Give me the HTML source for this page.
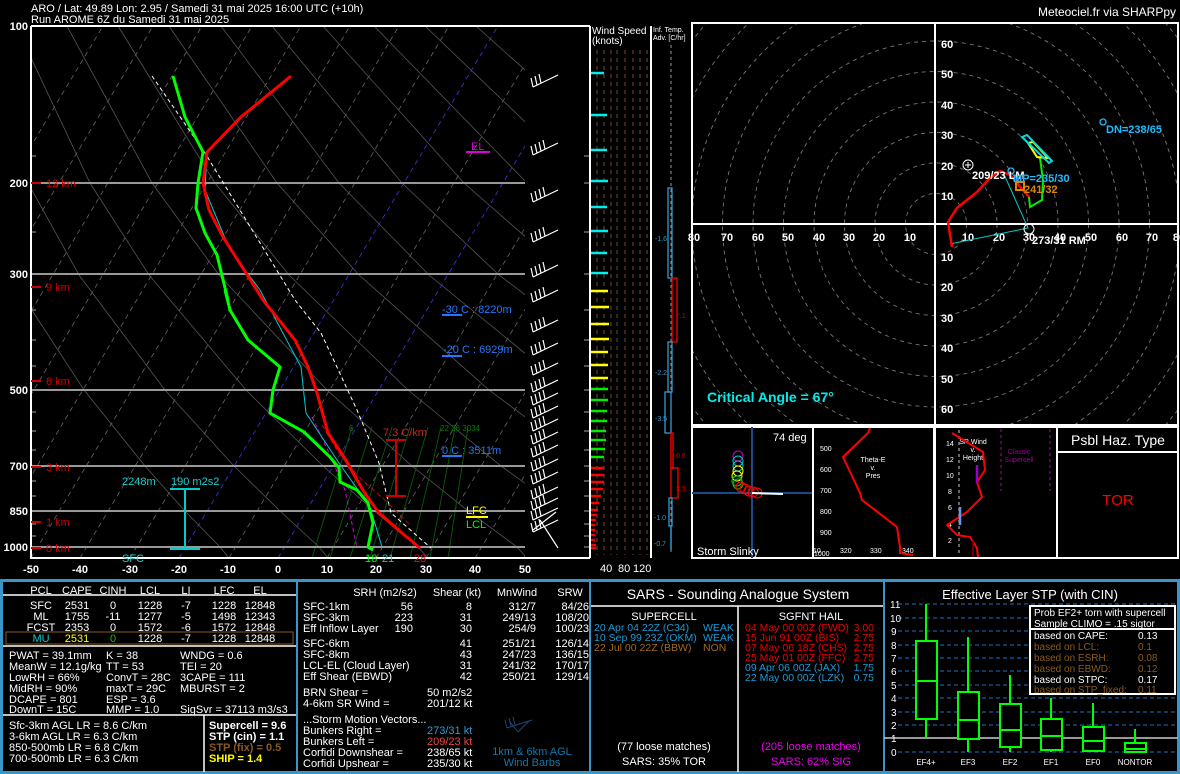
<!DOCTYPE html>
<html><head><meta charset="utf-8"><style>
html,body{margin:0;padding:0;background:#000;}
svg{display:block;font-family:"Liberation Sans",sans-serif;}
</style></head><body>
<svg width="1180" height="774" viewBox="0 0 1180 774" xmlns="http://www.w3.org/2000/svg">
<defs>
<clipPath id="sk"><rect x="31" y="26" width="494" height="532"/></clipPath>
<clipPath id="hd"><rect x="692" y="23" width="486" height="402"/></clipPath>
<g id="barb" stroke="#fff" stroke-width="1.2" fill="none"><path d="M533 5 L558 -7 M533 5 L531 -4 M537 3 L535 -6 M541 1 L539 -8 M545 -1 L543 -10"/></g>
<g id="barb2" stroke="#fff" stroke-width="1.2" fill="none"><path d="M533 5 L558 -7 M533 5 L531 -4 M537 3 L535 -6 M541 1 L539 -8"/></g>
</defs>
<rect width="1180" height="774" fill="#000"/>
<!-- header -->
<text x="31" y="12" fill="#fff" font-size="11">ARO / Lat: 49.89 Lon: 2.95 / Samedi 31 mai 2025 16:00 UTC (+10h)</text>
<text x="31" y="23" fill="#fff" font-size="11">Run AROME 6Z du Samedi 31 mai 2025</text>
<text x="1176" y="16" fill="#fff" font-size="12" text-anchor="end">Meteociel.fr via SHARPpy</text>

<!-- SKEW-T -->
<g clip-path="url(#sk)">
<g stroke="#666" stroke-width="0.8" stroke-dasharray="5,4">
<line x1="-216" y1="558" x2="103" y2="26"/><line x1="-166" y1="558" x2="153" y2="26"/><line x1="-117" y1="558" x2="202" y2="26"/><line x1="-67" y1="558" x2="252" y2="26"/><line x1="-18" y1="558" x2="301" y2="26"/><line x1="31" y1="558" x2="350" y2="26"/><line x1="80" y1="558" x2="399" y2="26"/><line x1="130" y1="558" x2="449" y2="26"/><line x1="229" y1="558" x2="548" y2="26"/><line x1="327" y1="558" x2="646" y2="26"/><line x1="376" y1="558" x2="695" y2="26"/><line x1="426" y1="558" x2="745" y2="26"/><line x1="475" y1="558" x2="794" y2="26"/><line x1="524" y1="558" x2="843" y2="26"/>
</g>
<g stroke="#33c" stroke-width="0.9" stroke-dasharray="5,4"><line x1="179" y1="558" x2="498" y2="26"/><line x1="278" y1="558" x2="597" y2="26"/></g>
<g stroke="#555" stroke-width="0.8" fill="none">
<polyline points="229,558 220,547 184,510 145,466 84,390 9,275 -35,183 -86,26"/>
<polyline points="328,558 319,547 279,510 234,466 165,390 79,275 28,183 -35,26"/>
<polyline points="428,558 418,547 373,510 323,466 246,390 149,275 90,183 16,26"/>
<polyline points="527,558 517,547 467,510 412,466 327,390 219,275 152,183 67,26"/>
<polyline points="626,558 616,547 562,510 501,466 408,390 289,275 215,183 118,26"/>
<polyline points="714,547 656,510 591,466 489,390 359,275 277,183 169,26"/>
<polyline points="813,547 750,510 680,466 570,390 429,275 339,183 221,26"/>
<polyline points="912,547 845,510 769,466 651,390 499,275 402,183 272,26"/>
<polyline points="1011,547 939,510 858,466 732,390 569,275 464,183 323,26"/>
<polyline points="947,466 813,390 639,275 527,183 374,26"/>
<polyline points="894,390 709,275 589,183 425,26"/>
<polyline points="779,275 651,183 476,26"/>
</g>
<g stroke="#0a5a0a" stroke-width="0.9">
<line x1="312" y1="558" x2="352" y2="427"/><line x1="330" y1="558" x2="372" y2="427"/><line x1="350" y1="558" x2="392" y2="427"/><line x1="370" y1="558" x2="410" y2="427"/><line x1="390" y1="558" x2="428" y2="427"/><line x1="410" y1="558" x2="441" y2="427"/><line x1="430" y1="558" x2="455" y2="427"/><line x1="448" y1="558" x2="468" y2="427"/>
</g>
</g>
<g font-size="8" fill="#0a7a0a"><text x="349" y="431">6</text><text x="440" y="431">22 26 3034</text></g>
<!-- isobars -->
<g stroke="#999" stroke-width="2"><line x1="31" y1="183" x2="525" y2="183"/><line x1="31" y1="274" x2="525" y2="274"/><line x1="31" y1="390" x2="525" y2="390"/><line x1="31" y1="466" x2="525" y2="466"/><line x1="31" y1="511" x2="525" y2="511"/><line x1="31" y1="547" x2="525" y2="547"/></g>
<g stroke="#888" stroke-width="1.2"><line x1="31" y1="156" x2="36" y2="156"/><line x1="31" y1="232" x2="36" y2="232"/><line x1="31" y1="310" x2="36" y2="310"/><line x1="31" y1="340" x2="36" y2="340"/><line x1="31" y1="366" x2="36" y2="366"/><line x1="31" y1="412" x2="36" y2="412"/><line x1="31" y1="431" x2="36" y2="431"/><line x1="31" y1="450" x2="36" y2="450"/><line x1="31" y1="481" x2="36" y2="481"/><line x1="31" y1="496" x2="36" y2="496"/><line x1="31" y1="524" x2="36" y2="524"/><line x1="31" y1="536" x2="36" y2="536"/>
<line x1="584" y1="156" x2="590" y2="156"/><line x1="584" y1="183" x2="590" y2="183"/><line x1="584" y1="232" x2="590" y2="232"/><line x1="584" y1="274" x2="590" y2="274"/><line x1="584" y1="310" x2="590" y2="310"/><line x1="584" y1="340" x2="590" y2="340"/><line x1="584" y1="366" x2="590" y2="366"/><line x1="584" y1="390" x2="590" y2="390"/><line x1="584" y1="412" x2="590" y2="412"/><line x1="584" y1="431" x2="590" y2="431"/><line x1="584" y1="450" x2="590" y2="450"/><line x1="584" y1="466" x2="590" y2="466"/><line x1="584" y1="481" x2="590" y2="481"/><line x1="584" y1="496" x2="590" y2="496"/><line x1="584" y1="511" x2="590" y2="511"/><line x1="584" y1="524" x2="590" y2="524"/><line x1="584" y1="536" x2="590" y2="536"/><line x1="584" y1="547" x2="590" y2="547"/></g>
<!-- frame -->
<path d="M31 26 L590 26 M31 26 L31 558 L590 558" stroke="#fff" stroke-width="2" fill="none"/>
<g fill="#fff" font-size="11" font-weight="bold" text-anchor="end"><text x="28" y="30">100</text><text x="28" y="187">200</text><text x="28" y="278">300</text><text x="28" y="394">500</text><text x="28" y="470">700</text><text x="28" y="515">850</text><text x="28" y="551">1000</text></g>
<g fill="#fff" font-size="11" font-weight="bold" text-anchor="middle"><text x="31" y="573">-50</text><text x="80" y="573">-40</text><text x="130" y="573">-30</text><text x="179" y="573">-20</text><text x="228" y="573">-10</text><text x="278" y="573">0</text><text x="327" y="573">10</text><text x="376" y="573">20</text><text x="426" y="573">30</text><text x="475" y="573">40</text><text x="525" y="573">50</text></g>
<g fill="#c00" font-size="11"><text x="46" y="187">12 km</text><text x="46" y="291">9 km</text><text x="46" y="385">6 km</text><text x="46" y="471">3 km</text><text x="46" y="526">1 km</text><text x="46" y="552">0 km</text></g>
<g stroke="#c00" stroke-width="2"><line x1="31" y1="183" x2="41" y2="183"/><line x1="31" y1="287" x2="41" y2="287"/><line x1="31" y1="381" x2="41" y2="381"/><line x1="31" y1="467" x2="41" y2="467"/><line x1="31" y1="522" x2="41" y2="522"/><line x1="31" y1="548" x2="41" y2="548"/></g>
<!-- profiles -->
<g clip-path="url(#sk)" fill="none">
<polyline stroke="#fff" stroke-width="1" stroke-dasharray="4,3" points="152,76 205,153 295,300 321,333 357,410 379,463 391,513 431,548"/>
<polyline stroke="#d0d" stroke-width="1" stroke-dasharray="4,3" points="312,417 330,455 345,490 357,548"/>
<polyline stroke="#c00" stroke-width="1" stroke-dasharray="5,3" points="322,425 340,455 362,480 385,500 410,525"/>
<polyline stroke="#0cc" stroke-width="1" points="290,76 241,117 207,152 205,190 230,250 260,290 301,367 306,413 339,463 370,507 382,547"/>
<polyline stroke="#0f0" stroke-width="3" points="173,76 185,117 203,152 198,183 196,208 205,233 217,255 228,300 225,290 230,310 248,340 280,367 273,390 270,413 304,432 330,457 339,468 340,482 357,490 368,503 373,523 368,547 373,550"/>
<polyline stroke="#f00" stroke-width="3" points="291,76 241,117 207,152 203,183 209,210 223,237 246,273 263,300 295,340 308,367 317,393 328,433 344,457 357,480 366,495 379,513 402,533 420,548"/>
</g>
<!-- annotations -->
<g stroke="#c00" stroke-width="2"><line x1="396" y1="440" x2="396" y2="496"/><line x1="386" y1="440" x2="406" y2="440"/><line x1="386" y1="496" x2="406" y2="496"/></g>
<text x="383" y="436" fill="#c22" font-size="11">7.3 C/km</text>
<g stroke="#0cc" stroke-width="2"><line x1="185" y1="489" x2="185" y2="549"/><line x1="170" y1="489" x2="200" y2="489"/><line x1="170" y1="549" x2="200" y2="549"/></g>
<text x="122" y="485" fill="#2cc" font-size="11">2248m</text><text x="171" y="485" fill="#2cc" font-size="11">190 m2s2</text>
<text x="122" y="562" fill="#2cc" font-size="11">SFC</text>
<text x="365" y="562" fill="#0f0" font-size="11">18</text><text x="382" y="562" fill="#0cc" font-size="11">21</text><text x="414" y="562" fill="#f00" font-size="11">28</text>
<text x="471" y="150" fill="#d0d" font-size="11">EL</text><line x1="466" y1="152" x2="490" y2="152" stroke="#d0d" stroke-width="2"/>
<text x="466" y="514" fill="#ff0" font-size="11">LFC</text><line x1="466" y1="517" x2="488" y2="517" stroke="#ff0" stroke-width="2"/>
<text x="466" y="528" fill="#0f0" font-size="11">LCL</text>
<g fill="#27f" font-size="11"><text x="442" y="313">-30 C : 8220m</text><text x="443" y="353">-20 C : 6929m</text><text x="442" y="454">0 C : 3511m</text></g>
<g stroke="#27f" stroke-width="2"><line x1="442" y1="315" x2="462" y2="315"/><line x1="442" y1="356" x2="462" y2="356"/><line x1="442" y1="456" x2="462" y2="456"/></g>
<!-- barbs -->
<use href="#barb2" y="82"/><use href="#barb" y="150"/><use href="#barb" y="197"/><use href="#barb" y="237"/><use href="#barb" y="272"/><use href="#barb" y="297"/><use href="#barb" y="327"/><use href="#barb" y="350"/><use href="#barb" y="370"/><use href="#barb" y="387"/><use href="#barb" y="400"/><use href="#barb" y="413"/><use href="#barb" y="426"/><use href="#barb" y="439"/><use href="#barb" y="452"/><use href="#barb" y="466"/><use href="#barb" y="479"/><use href="#barb" y="494"/><use href="#barb" y="505"/><use href="#barb2" y="515"/><use href="#barb2" y="527"/>
<g stroke="#fff" stroke-width="1.2"><line x1="540" y1="520" x2="558" y2="548"/><line x1="533" y1="530" x2="556" y2="512"/></g>

<!-- wind speed panel -->
<line x1="590" y1="26" x2="590" y2="558" stroke="#fff" stroke-width="2"/>
<line x1="651" y1="26" x2="651" y2="558" stroke="#fff" stroke-width="2"/>
<g stroke="#7a4a2a" stroke-width="1" stroke-dasharray="4,4"><line x1="597" y1="50" x2="597" y2="555"/><line x1="604" y1="50" x2="604" y2="555"/><line x1="611" y1="50" x2="611" y2="555"/><line x1="617" y1="50" x2="617" y2="555"/><line x1="625" y1="50" x2="625" y2="555"/><line x1="633" y1="50" x2="633" y2="555"/><line x1="640" y1="50" x2="640" y2="555"/><line x1="647" y1="50" x2="647" y2="555"/></g>
<text x="592" y="34" fill="#fff" font-size="10">Wind Speed</text><text x="592" y="44" fill="#fff" font-size="10">(knots)</text>
<g stroke-width="2.5">
<g stroke="#0ee"><line x1="591" y1="73" x2="604" y2="73"/><line x1="591" y1="115" x2="607" y2="115"/><line x1="591" y1="150" x2="607" y2="150"/><line x1="591" y1="181" x2="608" y2="181"/><line x1="591" y1="207" x2="607" y2="207"/><line x1="591" y1="231" x2="608" y2="231"/><line x1="591" y1="253" x2="607" y2="253"/><line x1="591" y1="273" x2="608" y2="273"/></g>
<g stroke="#ff0"><line x1="591" y1="291" x2="608" y2="291"/><line x1="591" y1="307" x2="609" y2="307"/><line x1="591" y1="324" x2="609" y2="324"/><line x1="591" y1="339" x2="609" y2="339"/><line x1="591" y1="352" x2="608" y2="352"/><line x1="591" y1="365" x2="608" y2="365"/><line x1="591" y1="378" x2="608" y2="378"/></g>
<g stroke="#0e0"><line x1="591" y1="389" x2="608" y2="389"/><line x1="591" y1="400" x2="608" y2="400"/><line x1="591" y1="411" x2="607" y2="411"/><line x1="591" y1="421" x2="607" y2="421"/><line x1="591" y1="431" x2="606" y2="431"/><line x1="591" y1="440" x2="606" y2="440"/><line x1="591" y1="449" x2="605" y2="449"/><line x1="591" y1="457" x2="604" y2="457"/></g>
<g stroke="#f00"><line x1="591" y1="468" x2="604" y2="468"/><line x1="591" y1="475" x2="604" y2="475"/><line x1="591" y1="482" x2="604" y2="482"/><line x1="591" y1="489" x2="603" y2="489"/><line x1="591" y1="496" x2="601" y2="496"/><line x1="591" y1="503" x2="599" y2="503"/><line x1="591" y1="510" x2="598" y2="510"/><line x1="591" y1="515" x2="597" y2="515"/><line x1="591" y1="520" x2="596" y2="520"/><line x1="591" y1="525" x2="595" y2="525"/><line x1="591" y1="530" x2="595" y2="530"/><line x1="591" y1="535" x2="595" y2="535"/><line x1="591" y1="540" x2="595" y2="540"/><line x1="591" y1="545" x2="596" y2="545"/><line x1="591" y1="548" x2="596" y2="548"/></g>
</g>
<g fill="#fff" font-size="11"><text x="600" y="572">40</text><text x="618" y="572">80</text><text x="633" y="572">120</text></g>
<!-- inf temp adv -->
<text x="653" y="32" fill="#fff" font-size="7">Inf. Temp.</text><text x="653" y="40" fill="#fff" font-size="7">Adv. [C/hr]</text>
<line x1="671" y1="45" x2="671" y2="552" stroke="#999" stroke-width="1" stroke-dasharray="3,3"/>
<g fill="none" stroke-width="1.3">
<rect x="668" y="188" width="4" height="90" stroke="#39c"/><rect x="672" y="278" width="5" height="64" stroke="#f00"/><rect x="668" y="342" width="4" height="50" stroke="#39c"/><rect x="665" y="392" width="6" height="41" stroke="#39c"/><rect x="671" y="433" width="2" height="35" stroke="#f00"/><rect x="671" y="468" width="7" height="30" stroke="#f00"/><rect x="669" y="498" width="3" height="28" stroke="#39c"/>
</g>
<line x1="671" y1="526" x2="671" y2="550" stroke="#39c" stroke-width="1.5"/>
<g font-size="7"><text x="655" y="241" fill="#39c">-1.6</text><text x="676" y="318" fill="#c00">2.1</text><text x="655" y="375" fill="#39c">-2.2</text><text x="655" y="421" fill="#39c">-3.5</text><text x="676" y="458" fill="#c00">0.6</text><text x="676" y="491" fill="#c00">3.5</text><text x="654" y="520" fill="#39c">-1.0</text><text x="654" y="546" fill="#39c">-0.7</text></g>

<!-- HODOGRAPH -->
<g clip-path="url(#hd)" fill="none" stroke="#777" stroke-width="0.9" stroke-dasharray="4,4">
<circle cx="936" cy="224" r="30.5"/><circle cx="936" cy="224" r="61"/><circle cx="936" cy="224" r="91.5"/><circle cx="936" cy="224" r="122"/><circle cx="936" cy="224" r="152.5"/><circle cx="936" cy="224" r="183"/><circle cx="936" cy="224" r="213.5"/><circle cx="936" cy="224" r="244"/><circle cx="936" cy="224" r="274.5"/><circle cx="936" cy="224" r="305"/>
</g>
<rect x="692" y="23" width="486" height="402" fill="none" stroke="#fff" stroke-width="2"/>
<line x1="692" y1="224" x2="1178" y2="224" stroke="#fff" stroke-width="2"/><line x1="935" y1="23" x2="935" y2="425" stroke="#fff" stroke-width="2"/>
<g fill="#fff" font-size="11" font-weight="bold">
<text x="941" y="48">60</text><text x="941" y="78">50</text><text x="941" y="109">40</text><text x="941" y="139">30</text><text x="941" y="170">20</text><text x="941" y="200">10</text><text x="941" y="261">10</text><text x="941" y="291">20</text><text x="941" y="322">30</text><text x="941" y="352">40</text><text x="941" y="383">50</text><text x="941" y="413">60</text>
</g>
<g fill="#fff" font-size="11" font-weight="bold" text-anchor="middle">
<text x="694" y="241">80</text><text x="727" y="241">70</text><text x="758" y="241">60</text><text x="788" y="241">50</text><text x="819" y="241">40</text><text x="849" y="241">30</text><text x="879" y="241">20</text><text x="910" y="241">10</text><text x="968" y="241">10</text><text x="999" y="241">20</text><text x="1029" y="241">30</text><text x="1060" y="241">40</text><text x="1091" y="241">50</text><text x="1122" y="241">60</text><text x="1152" y="241">70</text><text x="1179" y="241">80</text>
</g>
<polyline fill="none" stroke="#0cc" stroke-width="1" points="1003,172 1028,228 950,244"/>
<polyline fill="none" stroke="#f00" stroke-width="2.5" points="952,247 948,222 957,208 977,192 990,178 1000,171 1010,175 1023,190 1029,197"/>
<polyline fill="none" stroke="#0e0" stroke-width="2" points="1029,197 1030,207 1042,200 1043,180 1040,158"/>
<path d="M1037 157 L1028 143 L1033 142 L1048 158 Z" fill="none" stroke="#ff0" stroke-width="2"/>
<path d="M1022 137 L1027 135 L1052 161 L1049 163 Z" fill="none" stroke="#0dd" stroke-width="2"/>
<rect x="1016" y="182" width="8" height="8" fill="none" stroke="#d80" stroke-width="2"/>
<circle cx="968" cy="165" r="5" fill="none" stroke="#fff"/><path d="M965 165h6M968 162v6" stroke="#fff"/>
<circle cx="1029" cy="229" r="5" fill="none" stroke="#fff"/>
<circle cx="1011" cy="171" r="3" fill="none" stroke="#2bf" stroke-width="1.3"/>
<circle cx="1103" cy="122" r="3" fill="none" stroke="#2bf" stroke-width="1.3"/>
<g font-size="11" font-weight="bold">
<text x="972" y="179" fill="#fff">209/23 LM</text><text x="1013" y="182" fill="#2bf">MP=235/30</text><text x="1024" y="193" fill="#d80">241/32</text><text x="1106" y="133" fill="#2bf">DN=238/65</text><text x="1032" y="244" fill="#fff">273/31 RM</text>
</g>
<text x="707" y="402" fill="#0ee" font-size="14" font-weight="bold">Critical Angle = 67°</text>

<!-- small panels -->
<g fill="none" stroke="#fff" stroke-width="2"><rect x="692" y="427" width="121" height="131"/><rect x="813" y="427" width="121" height="131"/><rect x="935" y="427" width="122" height="131"/><rect x="1057" y="427" width="121" height="131"/><line x1="1057" y1="452" x2="1178" y2="452"/></g>
<!-- slinky -->
<g stroke="#1a4a8a" stroke-width="2"><line x1="692" y1="493" x2="812" y2="493"/><line x1="752" y1="427" x2="752" y2="558"/></g>
<g fill="none" stroke-width="1"><circle cx="738" cy="456" r="5" stroke="#c0c"/><circle cx="738" cy="461" r="5" stroke="#0cc"/><circle cx="738" cy="466" r="5" stroke="#0cc"/><circle cx="738" cy="471" r="5" stroke="#ff0"/><circle cx="737" cy="476" r="5" stroke="#ff0"/><circle cx="737" cy="481" r="5" stroke="#0c0"/><circle cx="738" cy="484" r="5" stroke="#0c0"/><circle cx="741" cy="487" r="5" stroke="#f00"/><circle cx="745" cy="489" r="5" stroke="#f00"/><circle cx="749" cy="491" r="5" stroke="#f00"/><circle cx="753" cy="492" r="5" stroke="#f00"/><circle cx="757" cy="493" r="5" stroke="#f00"/></g>
<line x1="752" y1="493" x2="783" y2="494" stroke="#fff" stroke-width="2"/>
<text x="773" y="441" fill="#fff" font-size="11">74 deg</text><text x="697" y="555" fill="#fff" font-size="11">Storm Slinky</text>
<!-- theta-e -->
<g fill="#fff" font-size="7"><text x="820" y="451">500</text><text x="820" y="472">600</text><text x="820" y="493">700</text><text x="820" y="514">800</text><text x="820" y="535">900</text><text x="814" y="556">1000</text><text x="840" y="553">320</text><text x="870" y="553">330</text><text x="902" y="553">340</text><text x="813" y="553">10</text></g>
<g fill="#fff" font-size="7" text-anchor="middle"><text x="873" y="462">Theta-E</text><text x="873" y="470">v.</text><text x="873" y="478">Pres</text></g>
<polyline fill="none" stroke="#f00" stroke-width="2" points="870,428 868,433 843,457 860,493 862,500 897,527 900,547 900,553 913,555"/>
<!-- SR wind -->
<line x1="959" y1="430" x2="959" y2="556" stroke="#aaa" stroke-width="1.2" stroke-dasharray="3,3"/>
<g stroke="#808" stroke-width="1.3" stroke-dasharray="3,3"><line x1="1001" y1="429" x2="1001" y2="491"/><line x1="1050" y1="429" x2="1050" y2="491"/></g>
<g fill="#fff" font-size="7"><text x="946" y="446">14</text><text x="946" y="462">12</text><text x="946" y="478">10</text><text x="948" y="494">8</text><text x="948" y="510">6</text><text x="948" y="527">4</text><text x="948" y="543">2</text></g>
<g fill="#fff" font-size="7" text-anchor="middle"><text x="973" y="444">SR Wind</text><text x="973" y="452">v.</text><text x="973" y="460">Height</text></g>
<g fill="#909" font-size="7" text-anchor="middle"><text x="1019" y="454">Classic</text><text x="1019" y="462">Supercell</text></g>
<polyline fill="none" stroke="#f00" stroke-width="2" points="952,433 983,452 985,470 977,482 982,497 967,512 947,525 957,535 970,537 977,548 978,557"/>
<line x1="977" y1="465" x2="977" y2="483" stroke="#90c" stroke-width="2.5"/><line x1="960" y1="507" x2="960" y2="525" stroke="#69e" stroke-width="2.5"/>
<line x1="973" y1="540" x2="973" y2="557" stroke="#800" stroke-width="1.5"/>
<text x="1118" y="445" fill="#fff" font-size="14" text-anchor="middle">Psbl Haz. Type</text>
<text x="1118" y="505" fill="#f00" font-size="15" text-anchor="middle">TOR</text>

<!-- BOTTOM PANELS -->
<rect x="1.5" y="580.5" width="1177" height="192" fill="none" stroke="#3a95c8" stroke-width="3"/>
<g stroke="#3a95c8" stroke-width="2"><line x1="297" y1="580" x2="297" y2="774"/><line x1="590" y1="580" x2="590" y2="774"/><line x1="884" y1="580" x2="884" y2="774"/></g>
<g stroke="#fff" stroke-width="1.5"><line x1="3" y1="595" x2="296" y2="595"/><line x1="3" y1="646" x2="296" y2="646"/><line x1="3" y1="715" x2="296" y2="715"/><line x1="204" y1="715" x2="204" y2="772"/><line x1="591" y1="606" x2="883" y2="606"/><line x1="738" y1="606" x2="738" y2="772"/></g>
<rect x="6" y="632" width="287" height="12" fill="none" stroke="#8a5a20" stroke-width="1"/>
<g font-size="11" fill="#fff" text-anchor="middle">
<text x="41" y="594">PCL</text><text x="77" y="594">CAPE</text><text x="113" y="594">CINH</text><text x="150" y="594">LCL</text><text x="186" y="594">LI</text><text x="224" y="594">LFC</text><text x="260" y="594">EL</text>
<text x="41" y="609">SFC</text><text x="77" y="609">2531</text><text x="113" y="609">0</text><text x="150" y="609">1228</text><text x="186" y="609">-7</text><text x="224" y="609">1228</text><text x="260" y="609">12848</text>
<text x="41" y="620">ML</text><text x="77" y="620">1755</text><text x="113" y="620">-11</text><text x="150" y="620">1277</text><text x="186" y="620">-5</text><text x="224" y="620">1498</text><text x="260" y="620">12343</text>
<text x="41" y="631">FCST</text><text x="77" y="631">2353</text><text x="113" y="631">0</text><text x="150" y="631">1572</text><text x="186" y="631">-6</text><text x="224" y="631">1572</text><text x="260" y="631">12848</text>
<text x="41" y="642" fill="#0cc">MU</text><text x="77" y="642" fill="#ff0">2531</text><text x="113" y="642" fill="#0c0">0</text><text x="150" y="642">1228</text><text x="186" y="642">-7</text><text x="224" y="642">1228</text><text x="260" y="642">12848</text>
</g>
<g font-size="11" fill="#fff">
<text x="9" y="659">PWAT = 39.1mm</text><text x="106" y="659">K = 38</text><text x="180" y="659">WNDG = 0.6</text>
<text x="9" y="670">MeanW = 12.1g/kg</text><text x="106" y="670">TT = 53</text><text x="180" y="670">TEI = 20</text>
<text x="9" y="681">LowRH = 66%</text><text x="106" y="681">ConvT = 28C</text><text x="180" y="681">3CAPE = 111</text>
<text x="9" y="692">MidRH = 90%</text><text x="106" y="692">maxT = 29C</text><text x="180" y="692">MBURST = 2</text>
<text x="9" y="703">DCAPE = 801</text><text x="106" y="703">ESP = 3.6</text>
<text x="9" y="714" dy="-1">DownT = 15C</text><text x="106" y="713">MMP = 1.0</text><text x="180" y="713">SigSvr = 37113 m3/s3</text>
<text x="9" y="729">Sfc-3km AGL LR = 8.6 C/km</text><text x="9" y="740">3-6km AGL LR = 6.3 C/km</text><text x="9" y="751">850-500mb LR = 6.8 C/km</text><text x="9" y="762">700-500mb LR = 6.3 C/km</text>
</g>
<g font-size="11" font-weight="bold"><text x="209" y="729" fill="#fff">Supercell = 9.6</text><text x="209" y="740" fill="#fff">STP (cin) = 1.1</text><text x="209" y="751" fill="#8a5a20">STP (fix) = 0.5</text><text x="209" y="762" fill="#ff0">SHIP = 1.4</text></g>
<!-- second panel -->
<g font-size="11" fill="#fff">
<text x="385" y="596" text-anchor="middle">SRH (m2/s2)</text><text x="457" y="596" text-anchor="middle">Shear (kt)</text><text x="517" y="596" text-anchor="middle">MnWind</text><text x="570" y="596" text-anchor="middle">SRW</text>
<text x="303" y="610">SFC-1km</text><text x="303" y="621">SFC-3km</text><text x="303" y="632">Eff Inflow Layer</text><text x="303" y="647">SFC-6km</text><text x="303" y="658">SFC-8km</text><text x="303" y="669">LCL-EL (Cloud Layer)</text><text x="303" y="680">Eff Shear (EBWD)</text>
<text x="303" y="696">BRN Shear =</text><text x="303" y="707">4-6km SR Wind =</text><text x="303" y="723">...Storm Motion Vectors...</text><text x="303" y="734">Bunkers Right =</text><text x="303" y="745">Bunkers Left =</text><text x="303" y="756">Corfidi Downshear =</text><text x="303" y="767">Corfidi Upshear =</text>
<text x="427" y="696">50 m2/s2</text><text x="427" y="707">201/12 kt</text><text x="427" y="734" fill="#39c">273/31 kt</text><text x="427" y="745" fill="#e44">209/23 kt</text><text x="427" y="756">238/65 kt</text><text x="427" y="767">235/30 kt</text>
</g>
<g font-size="11" fill="#fff" text-anchor="end">
<text x="413" y="610">56</text><text x="413" y="621">223</text><text x="413" y="632">190</text>
<text x="472" y="610">8</text><text x="472" y="621">31</text><text x="472" y="632">30</text><text x="472" y="647">41</text><text x="472" y="658">43</text><text x="472" y="669">31</text><text x="472" y="680">42</text>
<text x="536" y="610">312/7</text><text x="536" y="621">249/13</text><text x="536" y="632">254/9</text><text x="536" y="647">251/21</text><text x="536" y="658">247/23</text><text x="536" y="669">241/32</text><text x="536" y="680">250/21</text>
<text x="589" y="610">84/26</text><text x="589" y="621">108/20</text><text x="589" y="632">100/23</text><text x="589" y="647">126/14</text><text x="589" y="658">136/15</text><text x="589" y="669">170/17</text><text x="589" y="680">129/14</text>
</g>
<g stroke="#247" stroke-width="1" fill="none"><path d="M507 728 L532 720 M507 728 L505 720 M511 726 L509 718 M515 725 L513 717 M518 732 L510 722 M518 732 L529 721"/></g>
<g font-size="11" fill="#17a" text-anchor="middle"><text x="532" y="755">1km &amp; 6km AGL</text><text x="532" y="766">Wind Barbs</text></g>
<!-- SARS -->
<text x="738" y="599" fill="#fff" font-size="14" text-anchor="middle">SARS - Sounding Analogue System</text>
<g font-size="11" text-anchor="middle"><text x="664" y="620" fill="#fff">SUPERCELL</text><text x="811" y="620" fill="#fff">SGFNT HAIL</text><text x="664" y="750" fill="#fff">(77 loose matches)</text><text x="664" y="765" fill="#fff">SARS: 35% TOR</text><text x="811" y="750" fill="#e0e">(205 loose matches)</text><text x="811" y="765" fill="#e0e">SARS: 62% SIG</text></g>
<g font-size="10.5">
<text x="594" y="631" fill="#1a9ad6">20 Apr 04 22Z (C34)</text><text x="703" y="631" fill="#1a9ad6">WEAK</text>
<text x="594" y="641" fill="#1a9ad6">10 Sep 99 23Z (OKM)</text><text x="703" y="641" fill="#1a9ad6">WEAK</text>
<text x="594" y="651" fill="#a06a20">22 Jul 00 22Z (BBW)</text><text x="703" y="651" fill="#a06a20">NON</text>
<text x="745" y="631" fill="#e00">04 May 00 00Z (FWD)</text><text x="745" y="641" fill="#e00">15 Jun 91 00Z (BIS)</text><text x="745" y="651" fill="#e00">07 May 06 18Z (CHS)</text><text x="745" y="661" fill="#e00">25 May 01 00Z (FFC)</text><text x="745" y="671" fill="#1a9ad6">09 Apr 06 00Z (JAX)</text><text x="745" y="681" fill="#1a9ad6">22 May 00 00Z (LZK)</text>
</g>
<g font-size="10.5" text-anchor="end"><text x="874" y="631" fill="#e00">3.00</text><text x="874" y="641" fill="#e00">2.75</text><text x="874" y="651" fill="#e00">2.75</text><text x="874" y="661" fill="#e00">2.75</text><text x="874" y="671" fill="#1a9ad6">1.75</text><text x="874" y="681" fill="#1a9ad6">0.75</text></g>
<!-- STP -->
<text x="1030" y="599" fill="#fff" font-size="13" text-anchor="middle">Effective Layer STP (with CIN)</text>
<g stroke="#1a5a9a" stroke-width="1.3" stroke-dasharray="4,3"><line x1="898" y1="604" x2="1178" y2="604"/><line x1="898" y1="618" x2="1178" y2="618"/><line x1="898" y1="631" x2="1178" y2="631"/><line x1="898" y1="645" x2="1178" y2="645"/><line x1="898" y1="658" x2="1178" y2="658"/><line x1="898" y1="671" x2="1178" y2="671"/><line x1="898" y1="685" x2="1178" y2="685"/><line x1="898" y1="698" x2="1178" y2="698"/><line x1="898" y1="712" x2="1178" y2="712"/><line x1="898" y1="725" x2="1178" y2="725"/><line x1="898" y1="752" x2="1178" y2="752"/></g>
<line x1="884" y1="738" x2="1178" y2="738" stroke="#ccc" stroke-width="1.5"/>
<g fill="#fff" font-size="10"><text x="890" y="608">11</text><text x="890" y="622">10</text><text x="891" y="635">9</text><text x="891" y="649">8</text><text x="891" y="662">7</text><text x="891" y="675">6</text><text x="891" y="689">5</text><text x="891" y="702">4</text><text x="891" y="716">3</text><text x="891" y="729">2</text><text x="891" y="742">1</text><text x="891" y="756">0</text></g>
<g stroke="#0f0" stroke-width="2" fill="none">
<line x1="926" y1="604" x2="926" y2="738"/><rect x="916" y="641" width="21" height="78" fill="#000"/><line x1="916" y1="681" x2="937" y2="681"/>
<line x1="968" y1="637" x2="968" y2="752"/><rect x="958" y="692" width="21" height="47" fill="#000"/><line x1="958" y1="720" x2="979" y2="720"/>
<line x1="1010" y1="675" x2="1010" y2="752"/><rect x="1000" y="704" width="21" height="43" fill="#000"/><line x1="1000" y1="730" x2="1021" y2="730"/>
<line x1="1051" y1="698" x2="1051" y2="752"/><rect x="1041" y="719" width="21" height="31" fill="#000"/><line x1="1041" y1="736" x2="1062" y2="736"/>
<line x1="1093" y1="703" x2="1093" y2="752"/><rect x="1083" y="727" width="21" height="24" fill="#000"/><line x1="1083" y1="741" x2="1104" y2="741"/>
<line x1="1135" y1="729" x2="1135" y2="743"/><rect x="1125" y="743" width="21" height="9" fill="#000"/><line x1="1125" y1="749" x2="1146" y2="749"/>
</g>
<g fill="#fff" font-size="8" text-anchor="middle"><text x="926" y="765">EF4+</text><text x="968" y="765">EF3</text><text x="1010" y="765">EF2</text><text x="1051" y="765">EF1</text><text x="1093" y="765">EF0</text><text x="1135" y="765">NONTOR</text></g>
<rect x="1030" y="606" width="145" height="88" fill="#000" stroke="#fff" stroke-width="2"/>
<line x1="1030" y1="629" x2="1175" y2="629" stroke="#fff" stroke-width="2"/>
<g font-size="10"><text x="1034" y="616" fill="#fff">Prob EF2+ torn with supercell</text><text x="1034" y="627" fill="#fff">Sample CLIMO = .15 sigtor</text>
<text x="1034" y="639" fill="#fff">based on CAPE:</text><text x="1034" y="650" fill="#8a5a20">based on LCL:</text><text x="1034" y="661" fill="#8a5a20">based on ESRH:</text><text x="1034" y="672" fill="#8a5a20">based on EBWD:</text><text x="1034" y="683" fill="#fff">based on STPC:</text><text x="1034" y="694" dy="-1" fill="#8a5a20">based on STP_fixed:</text>
<text x="1138" y="639" fill="#fff">0.13</text><text x="1138" y="650" fill="#8a5a20">0.1</text><text x="1138" y="661" fill="#8a5a20">0.08</text><text x="1138" y="672" fill="#8a5a20">0.12</text><text x="1138" y="683" fill="#fff">0.17</text><text x="1138" y="693" fill="#8a5a20">0.11</text></g>
</svg>
</body></html>
